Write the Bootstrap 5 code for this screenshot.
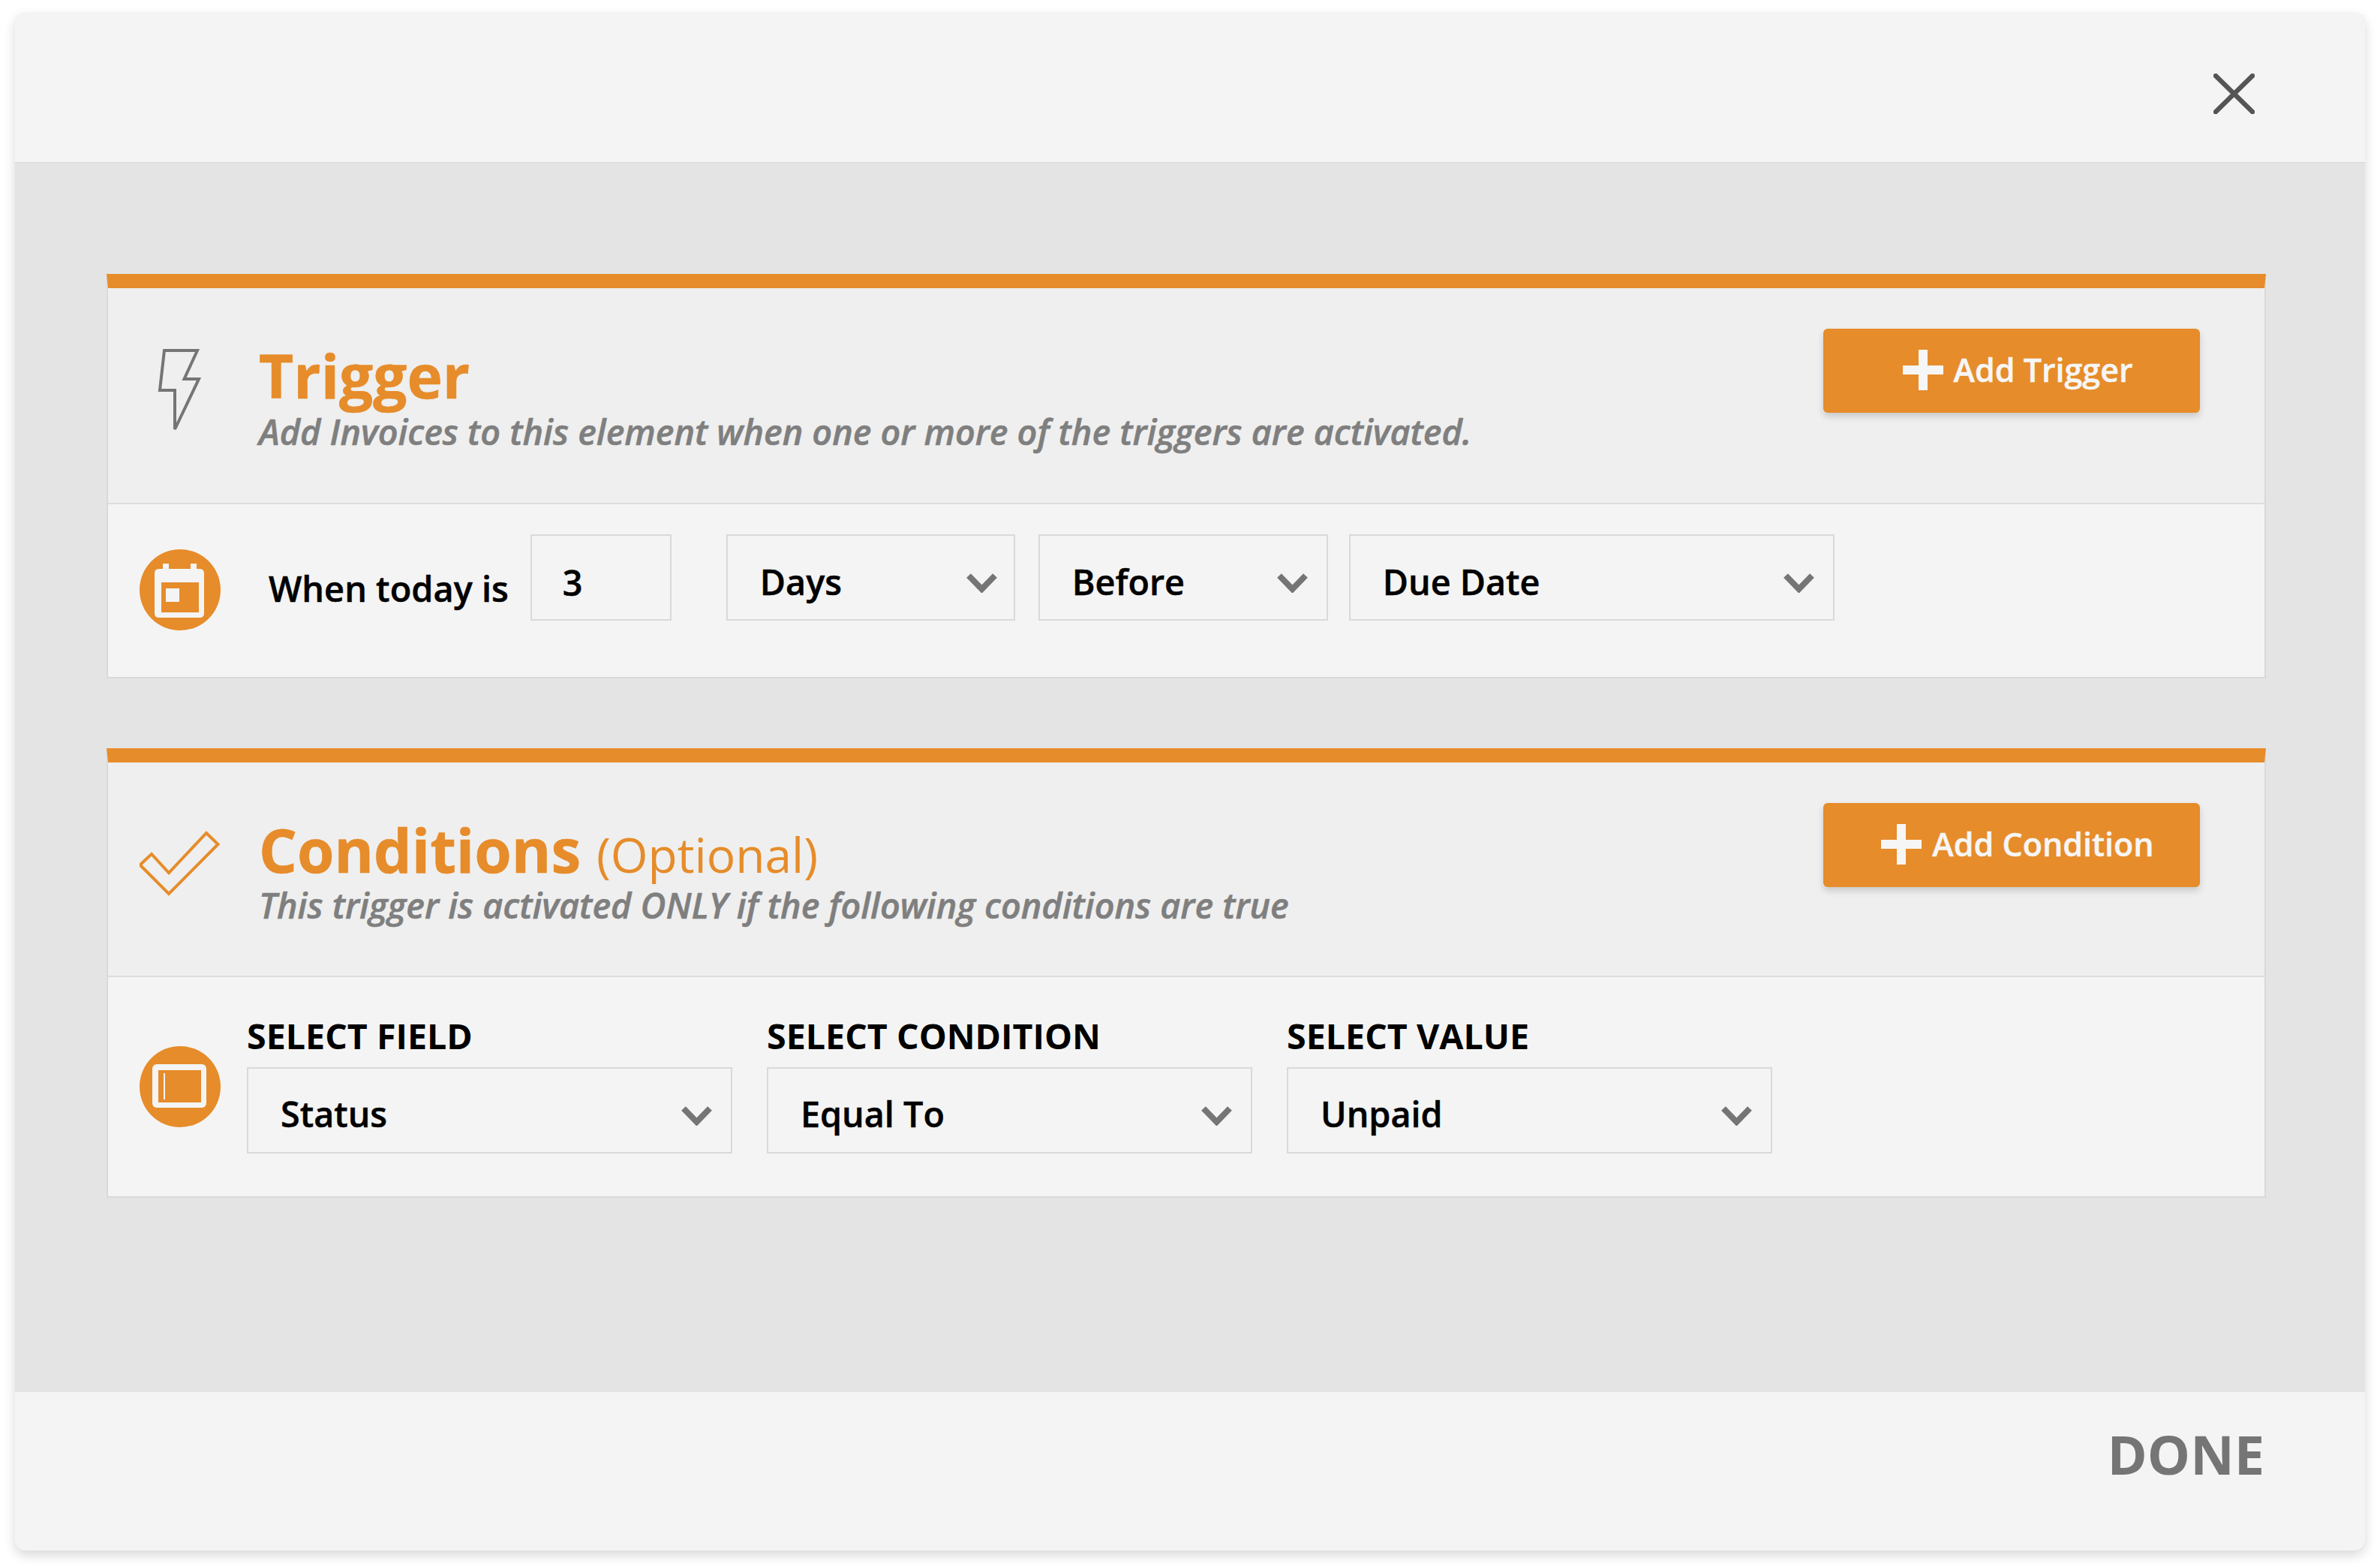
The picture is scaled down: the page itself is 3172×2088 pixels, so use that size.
<!DOCTYPE html>
<html lang="en">
<head>
<meta charset="utf-8">
<title>Trigger</title>
<link rel="stylesheet" href="https://cdn.jsdelivr.net/npm/bootstrap@5.3.0/dist/css/bootstrap.min.css">
<style>
html,body{height:100%}
body{background:#fff;font-family:"Open Sans","Liberation Sans",sans-serif;color:#000}
.dlg{width:3132px;height:2049px;margin:17px 0 0 20px;border-radius:14px;overflow:hidden;background:#e4e4e4;box-shadow:0 6px 16px rgba(0,0,0,.16)}
.dlg-top{height:199px;background:#f4f4f4;padding:81px 147px 0 0;flex:none;box-shadow:0 1px 1px rgba(0,0,0,.05)}
.dlg-x{width:55px;height:54px;border:0;background:none;padding:0;display:block}
.dlg-main{padding:149px 132px 0 122px;flex:1}
.dlg-foot{height:211px;background:#f4f4f4;flex:none;padding:32px 134px 0 0}
.done-link{font-size:72px;line-height:100px;font-weight:700;color:#757575;text-decoration:none}
.pane{border:2px solid #d9d9d9;border-top:19px solid #e68c2a;border-radius:0;background:#f4f4f4;margin-bottom:93px;margin-left:0}
.pane-head{background:#efefef;border-bottom:2px solid #dcdcdc;padding:54px 86px 65px 42px;border-radius:0}
.pane-head-b{padding-bottom:64px}
.head-ico{width:108px;height:120px;flex:none;margin-top:22px;margin-right:51px}
.head-txt{margin-top:22px}
.ttl{font-size:80px;line-height:80px;font-weight:700;color:#e68c2a;margin:0;-webkit-text-stroke:.6px currentColor}
.ttl-opt{font-size:64px;font-weight:400;-webkit-text-stroke:0}
.sub{font-size:46.700px;line-height:60px;font-weight:600;font-style:italic;color:#7f7f7f;margin:5px 0 0;-webkit-text-stroke:.6px currentColor}
.sub-b{margin-top:-3px}
.add-btn{width:502px;height:112px;background:#e68c2a;border:0;border-radius:6px;color:#f6f6f6;font-size:43px;font-weight:600;box-shadow:0 5px 10px rgba(0,0,0,.16);margin-left:auto;flex:none;padding:0 0 2px 16px;-webkit-text-stroke:.5px currentColor}
.add-btn:hover,.add-btn:active{background:#e68c2a!important;color:#f6f6f6!important}
.add-btn svg{width:54px;height:54px;margin-right:14px;flex:none}
.dot{width:108px;height:108px;flex:none}
.pane-row1{padding:40px 42px 74px;height:230px}
.dot-1{margin-top:20px}
.when{font-size:46.900px;font-weight:600;line-height:60px;margin:42px 29px 0 64px;white-space:nowrap;-webkit-text-stroke:.5px currentColor}
.sel,.num{height:115px;border:2px solid #d9d9d9;border-radius:0;background-color:#f4f4f4;font-size:46.700px;font-weight:600;color:#000;padding:10px 0 0 43px;box-shadow:none;-webkit-text-stroke:.5px currentColor}
.num{width:188px;padding:12px 0 0 41px;margin-right:73px}
.sel{background-image:url("data:image/svg+xml,%3Csvg xmlns='http://www.w3.org/2000/svg' viewBox='0 0 41 26'%3E%3Cpath d='M3 3 20.500 21 38 3' fill='none' stroke='%23757575' stroke-width='8'/%3E%3C/svg%3E");background-size:41px 26px;background-position:right 25px top 50px;background-repeat:no-repeat}
.w-a,.w-b,.w-c{padding-top:12px}
.w-a{width:385px;margin-right:31px;background-position:right 22px top 50px}
.w-b{width:386px;margin-right:28px}
.w-c{width:647px}
.pane-row2{padding:92px 42px 0;height:292px}
.fld-set{margin-left:35px;gap:46px;margin-top:-44px}
.fld{width:647px}
.fld-lab{font-size:46.600px;line-height:60px;font-weight:700;display:block;margin:0 0 12px;color:#000}
</style>
</head>
<body>
<div class="dlg d-flex flex-column">
  <div class="dlg-top d-flex justify-content-end">
    <button class="dlg-x" type="button" aria-label="Close">
      <svg width="55" height="54" viewBox="0 0 55 54"><path d="M3 3 52 51M52 3 3 51" stroke="#555" stroke-width="6.500" fill="none" stroke-linecap="round"/></svg>
    </button>
  </div>
  <div class="dlg-main">
    <section class="card pane">
      <div class="card-header pane-head d-flex align-items-start">
        <svg class="head-ico" viewBox="186 460 108 120"><path d="M219 467H263L245.500 505H265L233 572V520H213Z" fill="none" stroke="#757575" stroke-width="4"/></svg>
        <div class="head-txt">
          <h2 class="ttl">Trigger</h2>
          <p class="sub">Add Invoices to this element when one or more of the triggers are activated.</p>
        </div>
        <button class="btn add-btn d-flex align-items-center justify-content-center" type="button">
          <svg viewBox="0 0 54 54"><path d="M21 0H33V21H54V33H33V54H21V33H0V21H21Z" fill="#f6f6f6"/></svg>Add Trigger
        </button>
      </div>
      <div class="card-body pane-row1 d-flex align-items-start">
        <svg class="dot dot-1" viewBox="186 732 108 108">
          <circle cx="240" cy="786" r="54" fill="#e68c2a"/>
          <path d="M212 758H217V751H225V758H254V751H262V758H266Q272 758 272 764V817Q272 823 266 823H212Q206 823 206 817V764Q206 758 212 758Z" fill="#f4f4f4"/>
          <rect x="215" y="776" width="50" height="40" fill="#e68c2a"/>
          <rect x="221" y="784" width="18" height="18" fill="#f4f4f4"/>
        </svg>
        <label class="when" for="n1">When today is</label>
        <input id="n1" class="form-control num" type="text" value="3">
        <select class="form-select sel w-a"><option>Days</option></select>
        <select class="form-select sel w-b"><option>Before</option></select>
        <select class="form-select sel w-c"><option>Due Date</option></select>
      </div>
    </section>
    <section class="card pane">
      <div class="card-header pane-head pane-head-b d-flex align-items-start">
        <svg class="head-ico" viewBox="186 1092 108 120"><path d="M275 1110 290.500 1125 225 1191 186.600 1152.500 202 1138 225 1163Z" fill="none" stroke="#e68c2a" stroke-width="4"/></svg>
        <div class="head-txt">
          <h2 class="ttl">Conditions <span class="ttl-opt">(Optional)</span></h2>
          <p class="sub sub-b">This trigger is activated ONLY if the following conditions are true</p>
        </div>
        <button class="btn add-btn d-flex align-items-center justify-content-center" type="button">
          <svg viewBox="0 0 54 54"><path d="M21 0H33V21H54V33H33V54H21V33H0V21H21Z" fill="#f6f6f6"/></svg>Add Condition
        </button>
      </div>
      <div class="card-body pane-row2 d-flex align-items-start">
        <svg class="dot" viewBox="186 1394 108 108">
          <circle cx="240" cy="1448" r="54" fill="#e68c2a"/>
          <rect x="203" y="1418" width="72" height="58" rx="6" fill="#f4f4f4"/>
          <rect x="211" y="1426" width="57" height="43" fill="#e68c2a"/>
          <rect x="218" y="1430" width="2" height="35" fill="#f4f4f4"/>
        </svg>
        <div class="d-flex fld-set">
          <div class="fld"><label class="fld-lab">SELECT FIELD</label><select class="form-select sel"><option>Status</option></select></div>
          <div class="fld"><label class="fld-lab">SELECT CONDITION</label><select class="form-select sel"><option>Equal To</option></select></div>
          <div class="fld"><label class="fld-lab">SELECT VALUE</label><select class="form-select sel"><option>Unpaid</option></select></div>
        </div>
      </div>
    </section>
  </div>
  <div class="dlg-foot d-flex justify-content-end align-items-start">
    <a class="done-link" href="#">DONE</a>
  </div>
</div>
</body>
</html>
